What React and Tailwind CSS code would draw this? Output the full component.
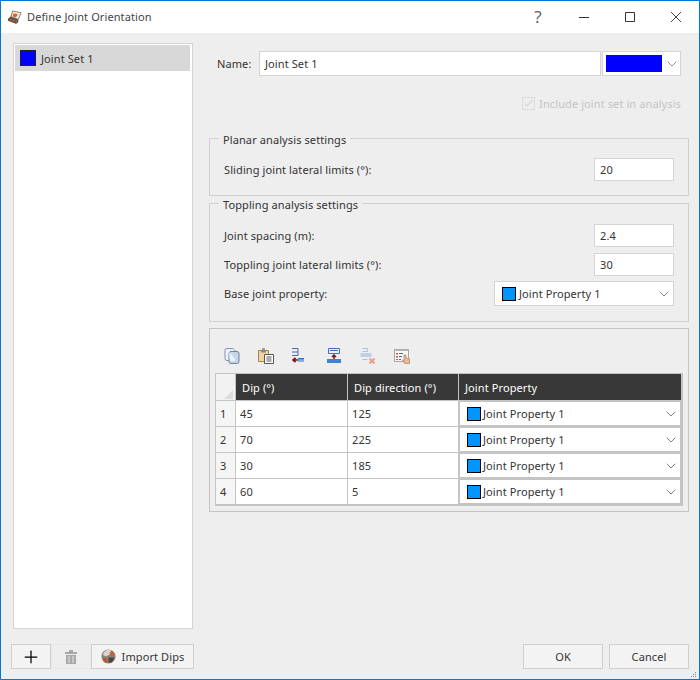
import React from "react";
import { ChevronDown, Plus, Check } from "lucide-react";

const font = "font-['Noto_Sans','Open_Sans',sans-serif]";

const Swatch = () => (
  <span className="h-[14px] w-[14px] shrink-0 border border-black bg-[#0095ff]" />
);

const RockIcon = ({ className }) => (
  <svg viewBox="0 0 16 16" className={className}>
    <circle cx="8" cy="8" r="7.500" fill="#8a8078" />
    <path d="M2 6a6.500 6.500 0 0 1 9-4.500L9 6 5 8z" fill="#d8d4cf" />
    <path d="M1.500 11l4-1.500L7 13l-2.500 2z" fill="#c9501c" />
    <path d="M9 4l3-2 2.500 4-3 1.500z" fill="#d9591f" />
    <path d="M8 9l6.500 0-3 5.500L8 14z" fill="#4c4540" />
  </svg>
);

const TitleIcon = () => (
  <svg viewBox="0 0 16 16" className="h-[15px] w-[15px]">
    <path d="M6 1l9 2-3 7-8-2.500z" fill="#efe9df" stroke="#6b5d50" strokeWidth=".8" />
    <path d="M7 3.500l4.500 1-2 3.500-3.500-1.200z" fill="#e0601f" />
    <path d="M1 9l9 3v3l-9-3.500z" fill="#8a4a2a" />
    <path d="M1 9l3-2 8 3-2 2z" fill="#555" />
    <path d="M10 12l2-2v2.500L10 15z" fill="#4c3a2c" />
  </svg>
);

const Input = ({ value, className }) => (
  <div className={`flex items-center border border-[#d4d4d4] bg-white px-[5px] pt-[2px] ${className}`}>
    {value}
  </div>
);

const Group = ({ title, className, children }) => (
  <fieldset className={`border border-[#d0d0d0] ${className}`}>
    <legend className="ml-[9px] px-[4px] pt-[4px] leading-[14px]">{title}</legend>
    <div className="px-[14px]">{children}</div>
  </fieldset>
);

const FieldRow = ({ label, value }) => (
  <div className="flex items-center justify-between">
    <span className="pt-[2px]">{label}</span>
    <Input value={value} className="h-[23px] w-[80px]" />
  </div>
);

const Toolbar = () => (
  <div className="flex h-[44px] items-center pl-[14px] pt-[10px]">
    <svg viewBox="0 0 16 16" className="h-[16px] w-[16px]">
      <path d="M1 2.500Q1 .500 3 .500h6l2 2v10H3Q1 12.500 1 10.500z" fill="#eef2f9" stroke="#7f93b8" />
      <path d="M5 5.500q0-2 2-2h6q2 0 2 2v8q0 2-2 2H7q-2 0-2-2z" fill="#c9d5e8" stroke="#6d83ab" />
      <path d="M5 4l6 7v2H6z" fill="#eef2f9" />
    </svg>
    <svg viewBox="0 0 16 16" className="ml-[18px] h-[16px] w-[16px]">
      <path d="M.500 2.500h10v11H.500z" fill="#efd5a6" stroke="#a58647" />
      <path d="M3 2.500h5v2H3z" fill="#8a8a8a" />
      <path d="M4.500 .500h2v2h-2z" fill="#aaa" stroke="#777" strokeWidth=".6" />
      <path d="M6.500 6.500h9v9h-9z" fill="#fff" stroke="#555" />
      <path d="M8.500 9h5M8.500 11h5M8.500 13h5" stroke="#555" />
    </svg>
    <svg viewBox="0 0 12 16" className="ml-[18px] h-[16px] w-[12px]">
      <path d="M0 .500h6M0 4h6M0 7.500h6M6 .500v7" fill="none" stroke="#4a6aa8" />
      <path d="M6 10h6v4H6z" fill="#7fb0e0" />
      <path d="M6 10h6v1.200H6z" fill="#2f6cb3" />
      <path d="M1 12h5M3.500 9.800L1 12l2.500 2.200" fill="none" stroke="#8b0f0f" strokeWidth="1.700" />
    </svg>
    <svg viewBox="0 0 14 16" className="ml-[23px] h-[16px] w-[14px]">
      <path d="M1.500 .500h11v5h-11z" fill="#eaf0f8" stroke="#3f73b8" />
      <path d="M3 2.500h8" stroke="#3f73b8" />
      <path d="M0 11h14v4H0z" fill="#3f83cc" />
      <path d="M7 11V7M5 9l2-2 2 2" fill="none" stroke="#8b0f0f" strokeWidth="1.500" />
    </svg>
    <svg viewBox="0 0 16 16" className="ml-[19px] h-[16px] w-[16px]">
      <path d="M2.500 .500h5M2.500 3.500h5M2.500 11.500h5M7.500 .500v3" fill="none" stroke="#b4c0d4" />
      <path d="M.500 5h11v4h-11z" fill="#bdd0e8" />
      <path d="M9.500 10.500l5 5M14.500 10.500l-5 5" stroke="#f09a8c" strokeWidth="2" />
    </svg>
    <svg viewBox="0 0 16 16" className="ml-[18px] h-[16px] w-[16px]">
      <path d="M.500 1.500h14v12H.500z" fill="#f6f6f6" stroke="#a5a5a5" />
      <path d="M.500 1.500h14v1.500H.500z" fill="#b5b5b5" />
      <path d="M2 5h2v1.500H2zM2 8h2v1.500H2zM2 11h2v1H2z" fill="#d0562a" />
      <path d="M5 5.500h4M5 8.500h3M5 11.500h2" stroke="#4a6aa8" />
      <path d="M10 7h2v3l3.500 1v4.500h-5L8.500 12l1.500.5z" fill="#eab893" stroke="#a9744a" strokeWidth=".6" />
    </svg>
  </div>
);

const rows = [
  { id: 1, dip: 45, direction: 125 },
  { id: 2, dip: 70, direction: 225 },
  { id: 3, dip: 30, direction: 185 },
  { id: 4, dip: 60, direction: 5 },
];

const Table = () => (
  <div className="ml-[5px] grid w-[468px] grid-cols-[19px_111px_110px_222px] gap-[1px] border-t border-r-2 border-b-2 border-l border-[#c4c4c4] bg-[#c4c4c4]">
    <div className="relative h-[26px] bg-[#f2f2f2]">
      <span className="absolute right-[2px] bottom-[1px] h-0 w-0 border-b-[9px] border-l-[9px] border-b-[#dcdcdc] border-l-transparent" />
    </div>
    <div className="flex items-center bg-[#383838] pl-[6px] pt-[2px] text-white">Dip (°)</div>
    <div className="flex items-center bg-[#383838] pl-[6px] pt-[2px] text-white">Dip direction (°)</div>
    <div className="flex items-center bg-[#383838] pl-[6px] pt-[2px] text-white">Joint Property</div>
    {rows.map((row) => (
      <React.Fragment key={row.id}>
        <div className="flex h-[25px] items-center bg-[#f5f5f5] pl-[4px] pt-[2px]">{row.id}</div>
        <div className="flex items-center bg-white pl-[4px] pt-[2px]">{row.dip}</div>
        <div className="flex items-center bg-white pl-[4px] pt-[2px]">{row.direction}</div>
        <div className="flex items-center gap-[2px] border border-[#c4c4c4] bg-white pl-[7px] pr-[1px]">
          <Swatch />
          <span className="flex-1 pt-[2px]">Joint Property 1</span>
          <ChevronDown size={16} strokeWidth={1} className="text-[#444]" />
        </div>
      </React.Fragment>
    ))}
  </div>
);

const FooterButton = ({ className, children }) => (
  <div className={`flex h-[25px] items-center justify-center border border-[#d0d0d0] bg-[#f3f3f3] ${className}`}>
    {children}
  </div>
);

const WindowButton = ({ children }) => (
  <div className="flex h-full w-[46px] items-center justify-center">{children}</div>
);

export default function App() {
  return (
    <div className={`${font} relative flex h-[680px] w-[700px] flex-col border border-[#0078d7] bg-[#eeeeee] text-[11px] tracking-[0.1px] text-[#333]`}>
      {/* title bar */}
      <div className="flex h-[32px] items-center bg-white pl-[6px]">
        <TitleIcon />
        <span className="ml-[5px] flex-1 text-[#444]">Define Joint Orientation</span>
        <WindowButton>
          <span className="text-[17px] text-[#666]">?</span>
        </WindowButton>
        <WindowButton>
          <svg viewBox="0 0 10 10" className="h-[10px] w-[10px]">
            <path d="M0 5.500h10" stroke="#333" />
          </svg>
        </WindowButton>
        <WindowButton>
          <svg viewBox="0 0 10 10" className="h-[10px] w-[10px]">
            <path d="M.500 .500h9v9h-9z" fill="none" stroke="#333" />
          </svg>
        </WindowButton>
        <WindowButton>
          <svg viewBox="0 0 10 10" className="h-[10px] w-[10px]">
            <path d="M0 0l10 10M10 0L0 10" stroke="#333" strokeWidth=".9" />
          </svg>
        </WindowButton>
      </div>

      <div className="flex flex-1 pl-[10px] pt-[10px]">
        {/* left side */}
        <div className="flex w-[183px] flex-col">
          <div className="ml-[2px] h-[586px] w-[180px] border border-[#d4d4d4] bg-white p-[1px]">
            <div className="flex h-[26px] w-[175px] items-center gap-[5px] bg-[#d8d8d8] pl-[5px]">
              <span className="h-[16px] w-[16px] border border-[#222] bg-[#0000ff]" />
              <span className="pt-[2px]">Joint Set 1</span>
            </div>
          </div>
          <div className="mt-[15px] flex">
            <FooterButton className="w-[40px]">
              <Plus size={20} strokeWidth={1.5} className="text-black" />
            </FooterButton>
            <div className="flex h-[25px] w-[40px] items-center justify-center border border-[#e8e8e8]">
              <svg viewBox="0 0 12 14" className="h-[14px] w-[12px]">
                <path d="M0 2h12v2H0zM4 0h4v2H4zM1 5h10v9H1z" fill="#a8a8a8" />
                <path d="M4 6v7M8 6v7" stroke="#e8e8e8" />
              </svg>
            </div>
            <FooterButton className="w-[103px] gap-[6px]">
              <RockIcon className="h-[15px] w-[15px]" />
              <span className="pt-[2px]">Import Dips</span>
            </FooterButton>
          </div>
        </div>

        {/* right side */}
        <div className="ml-[15px] flex w-[480px] flex-col">
          <div className="mt-[8px] flex h-[25px] items-center">
            <span className="ml-[8px] w-[42px] pt-[2px]">Name:</span>
            <Input value="Joint Set 1" className="h-[25px] w-[342px]" />
            <div className="ml-[1px] flex h-[25px] w-[79px] items-center border border-[#d4d4d4] bg-white pl-[3px]">
              <span className="h-[17px] w-[56px] bg-[#0000ff]" />
              <ChevronDown size={16} strokeWidth={1} className="ml-[2px] text-[#555]" />
            </div>
          </div>

          <div className="mt-[20px] flex h-[15px] items-center justify-end gap-[4px] pr-[8px] text-[#c4c4c4]">
            <span className="flex h-[13px] w-[13px] items-center justify-center border border-[#dcdcdc]">
              <Check size={11} strokeWidth={1.5} className="text-[#b5b5b5]" />
            </span>
            <span className="pt-[2px]">Include joint set in analysis</span>
          </div>

          <Group title="Planar analysis settings" className="mt-[18px] h-[67px] pt-[11px]">
            <FieldRow label="Sliding joint lateral limits (°):" value="20" />
          </Group>

          <Group title="Toppling analysis settings" className="mt-[-2px] h-[128px] pt-[12px]">
            <div className="flex flex-col gap-[6px]">
              <FieldRow label="Joint spacing (m):" value="2.4" />
              <FieldRow label="Toppling joint lateral limits (°):" value="30" />
              <div className="mt-[-1px] flex items-center justify-between">
                <span className="pt-[2px]">Base joint property:</span>
                <div className="flex h-[25px] w-[180px] items-center gap-[3px] border border-[#d4d4d4] bg-white pl-[7px] pr-[1px]">
                  <Swatch />
                  <span className="flex-1 pt-[2px]">Joint Property 1</span>
                  <ChevronDown size={16} strokeWidth={1} className="text-[#444]" />
                </div>
              </div>
            </div>
          </Group>

          <div className="mt-[6px] h-[184px] border border-[#c4c4c4]">
            <Toolbar />
            <Table />
          </div>

          <div className="mt-auto mb-[10px] flex justify-end gap-[6px]">
            <FooterButton className="w-[80px] pt-[2px]">OK</FooterButton>
            <FooterButton className="w-[80px] pt-[2px]">Cancel</FooterButton>
          </div>
        </div>
      </div>

      {/* size grip */}
      <svg viewBox="0 0 6 6" className="absolute right-[2px] bottom-[1px] h-[6px] w-[6px]">
        <path d="M4 0h1v1H4zM2 2h1v1H2zM4 2h1v1H4zM0 4h1v1H0zM2 4h1v1H2zM4 4h1v1H4z" fill="#8a8a8a" />
      </svg>
    </div>
  );
}
